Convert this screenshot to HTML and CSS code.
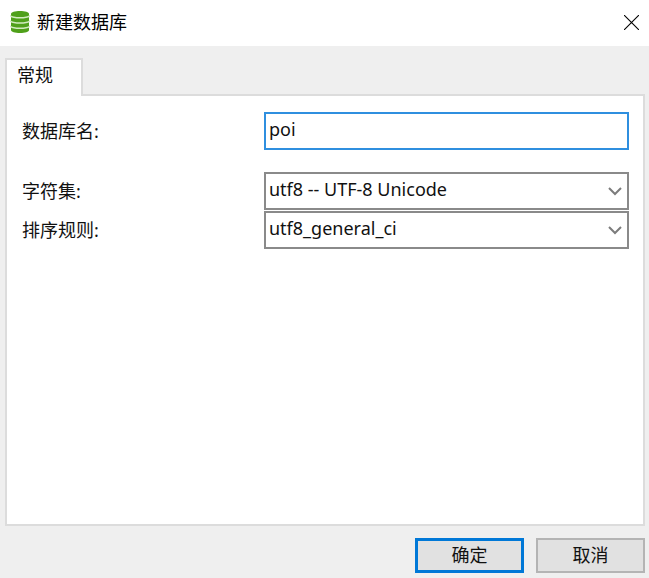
FILE: index.html
```html
<!DOCTYPE html>
<html lang="zh-CN">
<head>
    <meta charset="UTF-8">
    <meta name="viewport" content="width=device-width, initial-scale=1.0">
    <title>新建数据库</title>
    <link rel="stylesheet" href="styles.css">
</head>
<body>
    <header class="titlebar">
        <svg class="db-icon" width="20" height="22" viewBox="0 0 20 22" aria-hidden="true">
            <path fill="#4fa01a" d="M1 3C1 1 5 0 10 0s9 1 9 3v16c0 2-4 3-9 3s-9-1-9-3z"/>
            <path fill="none" stroke="#d3ebc0" stroke-width="1.4" d="M0 4.5c2 1.8 6 2.2 10 2.2s8-.4 10-2.2M0 9.8c2 1.8 6 2.2 10 2.2s8-.4 10-2.2M0 15.1c2 1.8 6 2.2 10 2.2s8-.4 10-2.2"/>
        </svg>
        <h1 class="title">新建数据库</h1>
        <button type="button" class="close" aria-label="关闭">
            <svg width="15" height="15" viewBox="0 0 15 15" aria-hidden="true">
                <path fill="none" stroke="#000" stroke-width="1.1" d="M0 0l15 15M15 0L0 15"/>
            </svg>
        </button>
    </header>

    <form class="dialog">
        <div class="tabs" role="tablist">
            <button type="button" class="tab" role="tab" id="tab-general" aria-selected="true" aria-controls="general">常规</button>
        </div>

        <div class="panel" role="tabpanel" id="general" aria-labelledby="tab-general">
            <div class="row row-name">
                <label for="db-name">数据库名:</label>
                <input type="text" class="field field-active" id="db-name" name="name" value="poi">
            </div>
            <div class="row">
                <label for="charset">字符集:</label>
                <div class="select">
                    <select class="field" id="charset" name="charset">
                        <option>utf8 -- UTF-8 Unicode</option>
                    </select>
                    <svg class="arrow" width="14" height="9" viewBox="0 0 14 9" aria-hidden="true">
                        <path fill="none" stroke="#7c7c7c" stroke-width="2" d="M1 1l6 6 6-6"/>
                    </svg>
                </div>
            </div>
            <div class="row">
                <label for="collation">排序规则:</label>
                <div class="select">
                    <select class="field" id="collation" name="collation">
                        <option>utf8_general_ci</option>
                    </select>
                    <svg class="arrow" width="14" height="9" viewBox="0 0 14 9" aria-hidden="true">
                        <path fill="none" stroke="#7c7c7c" stroke-width="2" d="M1 1l6 6 6-6"/>
                    </svg>
                </div>
            </div>
        </div>

        <div class="buttons">
            <button type="submit" class="btn btn-default">确定</button>
            <button type="button" class="btn">取消</button>
        </div>
    </form>
</body>
</html>
```
FILE: styles.css
```css
* {
    box-sizing: border-box;
}
body {
    margin: 0;
    min-height: 100vh;
    display: flex;
    flex-direction: column;
    background-color: #efefef;
    color: #111;
    font-family: "Noto Sans", "Noto Sans CJK SC", sans-serif;
    font-size: 18px;
    line-height: 24px;
}
button, input, select {
    font: inherit;
    color: inherit;
}
.titlebar {
    display: flex;
    align-items: center;
    height: 46px;
    padding: 0 10px 2px;
    background-color: #fff;
}
.title {
    flex: 1;
    margin: 0 0 0 7px;
    color: #000;
    font-size: 18px;
    font-weight: normal;
}
.close {
    display: flex;
    padding: 0;
    border: none;
    background: none;
}
.dialog {
    flex: 1;
    display: flex;
    flex-direction: column;
    padding: 12px 4px 5px 5px;
}
.tabs {
    display: flex;
}
.tab {
    position: relative;
    width: 78px;
    height: 38px;
    margin-bottom: -2px;
    padding: 0 10px 6px;
    border: 2px solid #dcdcdc;
    border-bottom: none;
    background-color: #fff;
    text-align: left;
}
.panel {
    flex: 1;
    padding: 16px 14px;
    border: 2px solid #dcdcdc;
    background-color: #fff;
}
.row {
    display: grid;
    grid-template-columns: 242px 1fr;
    align-items: center;
    margin-bottom: 1px;
    padding-left: 1px;
}
.row-name {
    margin-bottom: 22px;
}
.field {
    display: block;
    width: 100%;
    height: 38px;
    padding: 0 3px 4px;
    border: 2px solid #8a8a8a;
    border-radius: 0;
    outline: none;
    background-color: #fff;
    appearance: none;
}
.field-active {
    border-color: #2f8fdf;
}
.select {
    position: relative;
}
.arrow {
    position: absolute;
    top: 15px;
    right: 7px;
    pointer-events: none;
}
.buttons {
    display: flex;
    justify-content: flex-end;
    gap: 12px;
    padding-top: 12px;
}
.btn {
    width: 109px;
    height: 35px;
    padding: 0 0 2px;
    border: 2px solid #b4b4b4;
    background-color: #e1e1e1;
}
.btn-default {
    border: 3px solid #0078d7;
}
```
